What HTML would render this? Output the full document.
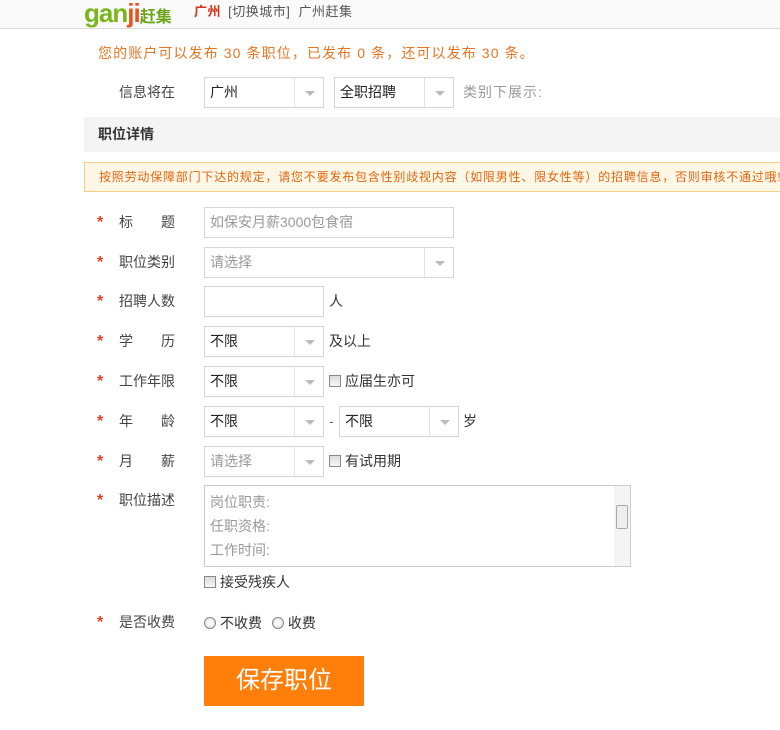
<!DOCTYPE html>
<html><head><meta charset="utf-8"><style>
*{margin:0;padding:0;box-sizing:border-box}
body{width:780px;height:730px;background:#fff;font-family:"Liberation Sans","Noto Sans CJK SC",sans-serif;font-size:14px;color:#333;position:relative;overflow:hidden}
.a{position:absolute;white-space:nowrap}
.hdr{position:absolute;left:0;top:0;width:780px;height:29px;background:#fafafa;border-bottom:1px solid #ddd}
.lbl{position:absolute;left:119px;font-size:14px;color:#444;line-height:20px}
.star{position:absolute;left:97px;color:#e0401c;font-size:16px;font-weight:bold;line-height:22px}
.box{position:absolute;border:1px solid #d5d5d5;background:#fff;height:31px;font-size:14px;line-height:29px;padding-left:5px;color:#222}
.arr{position:absolute;right:0;top:0;width:29px;height:29px;border-left:1px solid #e3e3e3}
.arr:after{content:"";position:absolute;left:10px;top:13px;border-left:5px solid transparent;border-right:5px solid transparent;border-top:5px solid #bbb}
.cb{display:inline-block;width:12px;height:12px;border:1px solid #888;background:linear-gradient(#ddd,#f6f6f6);vertical-align:-1px;margin-right:4px}
.rd{display:inline-block;width:12px;height:12px;border:1px solid #888;border-radius:50%;background:radial-gradient(#fff 30%,#ccc);vertical-align:-1px;margin-right:4px}
</style></head><body>
<div class="hdr"></div>
<div class="a" style="left:84px;top:-1px;font-size:26px;font-weight:bold;color:#7ab51d;line-height:28px;letter-spacing:-1px">gan<span style="color:#e8541e">ji</span><span style="font-size:16px;color:#6aa51b;letter-spacing:0">赶集</span></div>
<div class="a" style="left:194px;top:3px;font-size:13px;line-height:18px;letter-spacing:0.5px"><b style="color:#d3331b">广州</b> <span style="color:#555;margin-left:3px">[切换城市]</span> <span style="color:#555;margin-left:4px">广州赶集</span></div>
<div class="a" style="left:98px;top:43px;font-size:14px;color:#e87522;line-height:20px;letter-spacing:1.1px">您的账户可以发布 30 条职位，已发布 0 条，还可以发布 30 条。</div>
<div class="lbl" style="top:82px">信息将在</div>
<div class="box" style="left:204px;top:77px;width:120px">广州<div class="arr"></div></div>
<div class="box" style="left:334px;top:77px;width:120px">全职招聘<div class="arr"></div></div>
<div class="a" style="left:463px;top:82px;color:#999;line-height:20px;letter-spacing:1px">类别下展示:</div>
<div class="a" style="left:84px;top:117px;width:696px;height:35px;background:#f4f4f4;font-weight:bold;font-size:14px;line-height:35px;padding-left:14px;color:#333">职位详情</div>
<div class="a" style="left:84px;top:162px;width:700px;height:30px;background:#fff7e6;border:1px solid #f8cf86;font-size:12px;line-height:28px;padding-left:14px;color:#e0650f;letter-spacing:0.8px">按照劳动保障部门下达的规定，请您不要发布包含性别歧视内容（如限男性、限女性等）的招聘信息，否则审核不通过哦!</div>

<div class="star" style="top:212px">*</div><div class="lbl" style="top:212px">标<span style="margin-left:28px">题</span></div>
<div class="box" style="left:204px;top:207px;width:250px;color:#999">如保安月薪3000包食宿</div>
<div class="star" style="top:252px">*</div><div class="lbl" style="top:252px">职位类别</div>
<div class="box" style="left:204px;top:247px;width:250px;color:#999">请选择<div class="arr"></div></div>
<div class="star" style="top:291px">*</div><div class="lbl" style="top:291px">招聘人数</div>
<div class="box" style="left:204px;top:286px;width:120px"></div><div class="a" style="left:329px;top:291px;line-height:20px">人</div>
<div class="star" style="top:331px">*</div><div class="lbl" style="top:331px">学<span style="margin-left:28px">历</span></div>
<div class="box" style="left:204px;top:326px;width:120px">不限<div class="arr"></div></div><div class="a" style="left:329px;top:331px;line-height:20px">及以上</div>
<div class="star" style="top:371px">*</div><div class="lbl" style="top:371px">工作年限</div>
<div class="box" style="left:204px;top:366px;width:120px">不限<div class="arr"></div></div><div class="a" style="left:329px;top:371px;line-height:20px"><span class="cb"></span>应届生亦可</div>
<div class="star" style="top:411px">*</div><div class="lbl" style="top:411px">年<span style="margin-left:28px">龄</span></div>
<div class="box" style="left:204px;top:406px;width:120px">不限<div class="arr"></div></div><div class="a" style="left:329px;top:411px;line-height:20px;color:#666">-</div>
<div class="box" style="left:339px;top:406px;width:120px">不限<div class="arr"></div></div><div class="a" style="left:463px;top:411px;line-height:20px">岁</div>
<div class="star" style="top:451px">*</div><div class="lbl" style="top:451px">月<span style="margin-left:28px">薪</span></div>
<div class="box" style="left:204px;top:446px;width:120px;color:#999">请选择<div class="arr"></div></div><div class="a" style="left:329px;top:451px;line-height:20px"><span class="cb"></span>有试用期</div>
<div class="star" style="top:490px">*</div><div class="lbl" style="top:490px">职位描述</div>
<div class="a" style="left:204px;top:485px;width:427px;height:82px;border:1px solid #ccc;color:#999;font-size:14px;line-height:24px;padding:4px 5px">岗位职责:<br>任职资格:<br>工作时间:
<div style="position:absolute;right:0;top:0;width:16px;height:80px;background:#f4f4f4"><div style="position:absolute;left:2px;top:19px;width:12px;height:24px;border:1px solid #aaa;background:#eee;border-radius:2px"></div></div></div>
<div class="a" style="left:204px;top:572px;line-height:20px"><span class="cb"></span>接受残疾人</div>
<div class="star" style="top:612px">*</div><div class="lbl" style="top:612px">是否收费</div>
<div class="a" style="left:204px;top:613px;line-height:20px"><span class="rd"></span>不收费 <span class="rd" style="margin-left:6px"></span>收费</div>
<div class="a" style="left:204px;top:656px;width:160px;height:50px;background:#ff7f0a;color:#fff;font-size:24px;line-height:50px;text-align:center">保存职位</div>
</body></html>
